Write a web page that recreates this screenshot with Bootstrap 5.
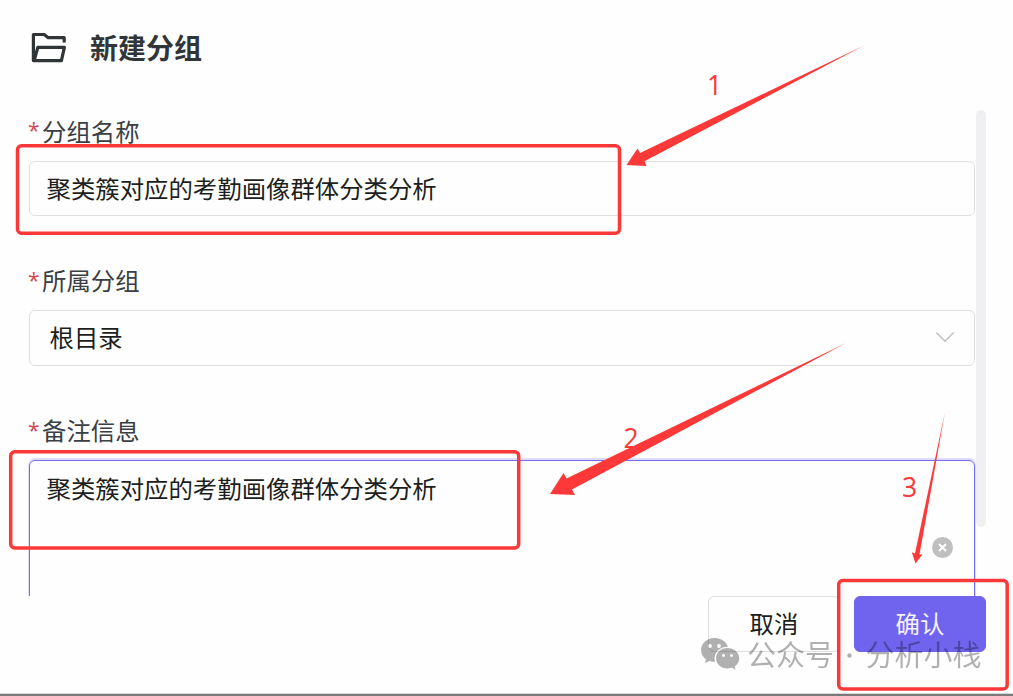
<!DOCTYPE html>
<html lang="zh-CN">
<head>
<meta charset="utf-8">
<meta name="viewport" content="width=device-width, initial-scale=1">
<title>新建分组</title>
<link href="https://cdn.jsdelivr.net/npm/bootstrap@5.3.0/dist/css/bootstrap.min.css" rel="stylesheet">
<style>
  body { font-family: "Noto Sans CJK SC", sans-serif; font-size: 24.4px; color: #1d1e20; background: #fefefe; }
  .dialog-page { height: 696px; overflow: hidden; }
  .dialog-head { height: 110px; padding: 28px 0 0 28px; }
  .dialog-head svg { margin-top: 1px; }
  .dialog-head h1 { font-size: 28px; line-height: 38px; margin: 0 0 0 22px; font-weight: 700; color: #303538; }
  .dialog-main { height: 486px; padding-left: 29px; gap: 1px; overflow: hidden; }
  .fields { width: 946px; }
  .field-label { height: 36px; line-height: 35px; margin: 3px 0 12px; color: #3a3f44; display: flex; }
  .field-box + .field-label { margin-top: 47px; margin-bottom: 11px; line-height: 34px; }
  .field-label i { font: 21px/34px "Open Sans", sans-serif; color: #d24658; width: 14px; margin-left: -1px; }
  .form-control.field-box { height: 55px; border: 1px solid #dedfe2; border-radius: 6px; padding: 0 16.5px; font-size: 24.4px; color: #1d1e20; background: transparent; line-height: 52px; }
  .form-control.select-box { height: 56px; padding: 0 19px 2px 19.5px; }
  .form-control.note-box { height: 180px; border-color: #776ceb; box-shadow: 0 -1px 0 1px #dedcfb; padding-top: 1px; }
  .clear-icon { position: absolute; right: 21px; top: 76px; }
  .scroll-thumb { width: 10px; height: 417px; background: #f0f0f2; border-radius: 5px; }
  .dialog-foot { height: 97px; padding-right: 27px; gap: 14px; }
  .dialog-foot .btn { width: 132px; height: 56px; font-size: 24.4px; line-height: 52px; padding: 0 0 2px; border-radius: 6px; }
  .btn-cancel { border: 1px solid #dedfe2; color: #1d1e20; }
  .btn-ok, .btn-ok:hover { background: #7064ef; color: #f3f1ff; border: 1px solid #7064ef; }
  .page-edge { height: 3px; background: #7b7b7b; border-top: 1px solid #d5d5d5; }
  .notes { position: absolute; left: 0; top: 0; pointer-events: none; }
  .notes text { font-family: "Noto Sans CJK SC", sans-serif; }
  .notes .step { font-family: "Open Sans", "Noto Sans CJK SC", sans-serif; }
</style>
</head>
<body>
<div class="dialog-page position-relative d-flex flex-column">
  <header class="dialog-head d-flex align-items-start">
    <svg width="40" height="38" viewBox="0 0 40 38" fill="none" stroke="#303538" stroke-width="3.2" stroke-linejoin="round">
      <path d="M36.200 13.500V8.700H20.200L16.200 5.500H5.400V31.600H33.400L36.400 18.400H9.800L6.200 31.600"/>
    </svg>
    <h1>新建分组</h1>
  </header>

  <main class="dialog-main d-flex align-items-start">
    <div class="fields">
      <div class="field-label"><i>*</i>分组名称</div>
      <div class="form-control field-box">聚类簇对应的考勤画像群体分类分析</div>

      <div class="field-label"><i>*</i>所属分组</div>
      <div class="form-control field-box select-box d-flex align-items-center justify-content-between">
        <span>根目录</span>
        <svg width="20" height="12" viewBox="0 0 20 12" fill="none" stroke="#bfc0c3" stroke-width="1.6"><path d="M1.300 1.500L10 10.200L18.700 1.500"/></svg>
      </div>

      <div class="field-label"><i>*</i>备注信息</div>
      <div class="form-control field-box note-box position-relative">聚类簇对应的考勤画像群体分类分析
        <svg class="clear-icon" width="21" height="21" viewBox="0 0 21 21"><circle cx="10.5" cy="10.5" r="10.5" fill="#bfbfbf"/><path d="M7 7L14 14M14 7L7 14" stroke="#fff" stroke-width="2"/></svg>
      </div>
    </div>
    <div class="scroll-thumb"></div>
  </main>

  <footer class="dialog-foot d-flex justify-content-end align-items-start">
    <button class="btn btn-cancel">取消</button>
    <button class="btn btn-ok">确认</button>
  </footer>
  <div class="page-edge"></div>

  <!-- annotation layer: numbered arrows, frames and the account watermark -->
  <svg class="notes" width="1013" height="696" viewBox="0 0 1013 696">
    <g opacity=".3">
      <mask id="bubbles"><rect x="690" y="630" width="60" height="50" fill="#fff"/><ellipse cx="727.5" cy="658.5" rx="13" ry="11.8" fill="#000"/><circle cx="710" cy="646" r="1.9" fill="#000"/><circle cx="719" cy="646" r="1.9" fill="#000"/></mask>
      <path mask="url(#bubbles)" d="M714.500 638C706.500 638 701 643.700 701 650C701 654 703 657 706 659.500L704.700 663L709.500 660.900C723 664.500 728.500 657 728.500 650C728.500 643.500 722.500 638 714.500 638Z"/>
      <path fill-rule="evenodd" d="M727.500 648C720.800 648 716 652.800 716 658.300C716 664 721 668.500 727.500 668.500L732 667.800L735.600 669.800L734.800 666.500C737.500 664.600 739.200 661.700 739.200 658.300C739.200 652.800 734 648 727.500 648ZM723.500 654.100a1.500 1.500 0 1 0 .01 0ZM731.500 654.100a1.500 1.500 0 1 0 .01 0Z"/>
      <text x="747" y="665.500" font-size="29">公众号</text>
      <circle cx="849.500" cy="655.500" r="2.200"/>
      <text x="865.500" y="665.500" font-size="29">分析小栈</text>
    </g>
    <g fill="none" stroke="#fc3838" stroke-width="3.500">
      <rect x="17.500" y="145.700" width="602" height="87.600" rx="4"/>
      <rect x="10.700" y="451.700" width="508" height="96.300" rx="4"/>
      <rect x="838.700" y="580.500" width="168.500" height="108.500" rx="4"/>
    </g>
    <g fill="#fc3838">
      <path d="M626.500 165L637.500 148.500L640 153L864 45.500L644.500 161.300L646.500 166Z"/>
      <path d="M550 494L563.500 473L566.500 478.500L846 343L572 489.500L575 495Z"/>
      <path d="M915.500 563.500L911.800 552.300L915 553.500L945 412L919.500 554.500L922.500 554.300Z"/>
      <text class="step" x="707" y="95" font-size="26.500">1</text>
      <text class="step" x="623.500" y="448" font-size="26.500">2</text>
      <text class="step" x="902" y="497" font-size="26.500">3</text>
    </g>
  </svg>
</div>
<script src="https://cdn.jsdelivr.net/npm/bootstrap@5.3.0/dist/js/bootstrap.bundle.min.js"></script>
</body>
</html>
